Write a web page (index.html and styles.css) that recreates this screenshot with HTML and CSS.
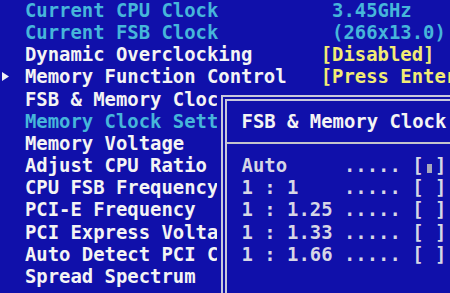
FILE: index.html
```html
<!DOCTYPE html>
<html>
<head>
<meta charset="utf-8">
<link rel="stylesheet" href="styles.css">
</head>
<body>
<div class="screen">
  <div class="list">
    <div class="row"><span class="mark"></span><span class="label info">Current CPU Clock</span><span class="value info num">3.45GHz</span></div>
    <div class="row"><span class="mark"></span><span class="label info">Current FSB Clock</span><span class="value info num">(266x13.0)</span></div>
    <div class="row"><span class="mark"></span><span class="label">Dynamic Overclocking</span><span class="value opt">[Disabled]</span></div>
    <div class="row"><span class="mark"><svg class="arrow" width="7" height="9" viewBox="0 0 7 9"><path d="M0 0 L7 4.5 L0 9 Z" fill="#f0f0f4"/></svg></span><span class="label">Memory Function Control</span><span class="value opt">[Press Enter]</span></div>
    <div class="row"><span class="mark"></span><span class="label">FSB &amp; Memory Clock</span></div>
    <div class="row"><span class="mark"></span><span class="label info">Memory Clock Setting</span></div>
    <div class="row"><span class="mark"></span><span class="label">Memory Voltage</span></div>
    <div class="row"><span class="mark"></span><span class="label">Adjust CPU Ratio</span></div>
    <div class="row"><span class="mark"></span><span class="label">CPU FSB Frequency</span></div>
    <div class="row"><span class="mark"></span><span class="label">PCI-E Frequency</span></div>
    <div class="row"><span class="mark"></span><span class="label">PCI Express Voltage</span></div>
    <div class="row"><span class="mark"></span><span class="label">Auto Detect PCI Clk</span></div>
    <div class="row"><span class="mark"></span><span class="label">Spread Spectrum</span></div>
  </div>

  <div class="popup">
    <div class="ptitle">FSB &amp; Memory Clock</div>
    <div class="divider"></div>
    <div class="prow">Auto     ..... [<span class="sel"></span>]</div>
    <div class="prow">1 : 1    ..... [ ]</div>
    <div class="prow">1 : 1.25 ..... [ ]</div>
    <div class="prow">1 : 1.33 ..... [ ]</div>
    <div class="prow">1 : 1.66 ..... [ ]</div>
  </div>
</div>
</body>
</html>
```
FILE: styles.css
```css
html, body {
  margin: 0;
  padding: 0;
  background: #1010aa;
}

.screen {
  position: relative;
  width: 450px;
  height: 293px;
  overflow: hidden;
  background: #1010aa;
  font-family: "DejaVu Sans Mono", "Liberation Mono", monospace;
  font-weight: bold;
  font-size: 18.9px;
  color: #f4f4f4;
}

.list {
  margin-top: -1px;
  display: flex;
  flex-direction: column;
}

.row {
  display: grid;
  grid-template-columns: 25px 26ch 1fr;
  height: 22.17px;
  line-height: 22.17px;
  white-space: pre;
}

.mark {
  display: flex;
  align-items: center;
  padding-left: 2px;
}

.label {
  overflow: hidden;
}

.info {
  color: #46b6da;
}

.num {
  padding-left: 1ch;
}

.opt {
  color: #f2ec74;
}

.popup {
  position: absolute;
  left: 221px;
  top: 95px;
  right: -20px;
  bottom: -20px;
  background: #1010aa;
  border-top: 6px double #c8c8dc;
  border-left: 6px double #c8c8dc;
  box-shadow: -4px -7px 0 #1010aa;
  padding-top: 8.8px;
  color: #d6d6e6;
}

.ptitle {
  height: 22.17px;
  line-height: 22.17px;
  padding-left: 14.6px;
  color: #f4f4f4;
  white-space: pre;
}

.divider {
  margin: 10.1px 0 10.07px;
  border-top: 2px solid #c4c4cc;
}

.prow {
  height: 22.17px;
  line-height: 22.17px;
  padding-left: 14.6px;
  white-space: pre;
}

.sel {
  display: inline-block;
  width: 1ch;
  height: 9px;
  background: linear-gradient(to right, transparent 3px, #a8a8bc 3px, #a8a8bc 8px, transparent 8px);
  vertical-align: -1px;
}
```
